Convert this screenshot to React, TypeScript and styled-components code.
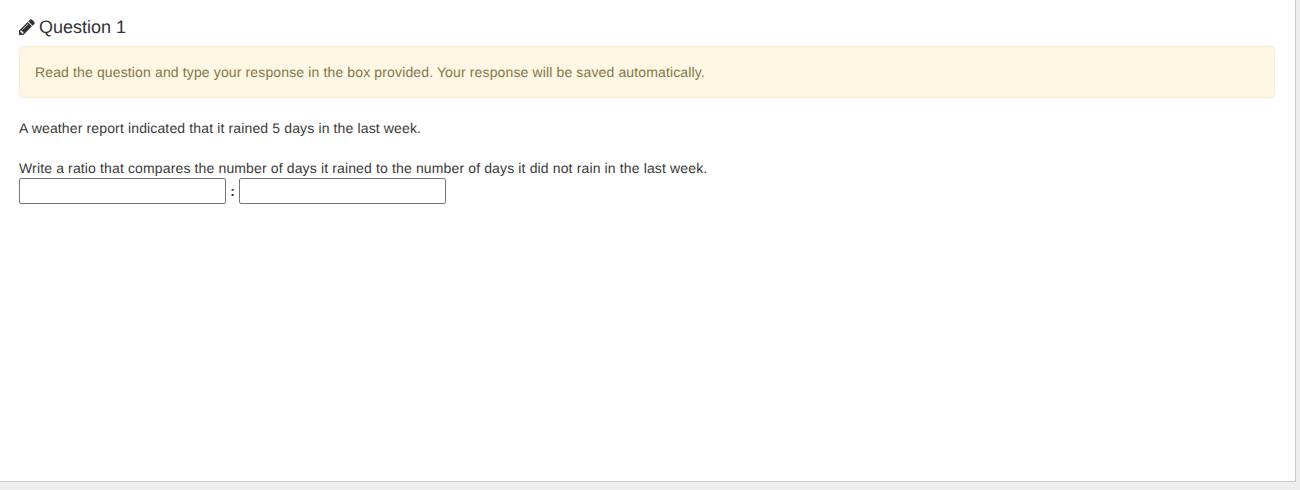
import React from "react";
import styled, { createGlobalStyle } from "styled-components";

const GlobalStyle = createGlobalStyle`
  html, body {
    margin: 0;
    padding: 0;
    height: 490px;
    overflow: hidden;
    background: #eeeeee;
    font-family: "Liberation Sans", Arial, sans-serif;
    font-size: 14px;
    line-height: 20px;
    color: #333333;
    text-rendering: geometricPrecision;
  }
`;

const Panel = styled.main`
  box-sizing: border-box;
  width: 1296px;
  height: 482px;
  padding: 17px 20px 0 19px;
  background: #ffffff;
  border-right: 1px solid #cccccc;
  border-bottom: 1px solid #cccccc;
`;

const Heading = styled.h3`
  display: flex;
  align-items: center;
  gap: 4px;
  margin: 0 0 9px;
  font-size: 18px;
  font-weight: 500;
  line-height: 20px;
  color: #333333;
`;

const PencilIcon = styled.svg`
  width: 16px;
  height: 16px;
  fill: #333333;
`;

const Alert = styled.div`
  box-sizing: border-box;
  height: 52px;
  margin-bottom: 20px;
  padding: 15px;
  background: #fdf7e3;
  border: 1px solid #faebcc;
  border-radius: 4px;
  color: #85754a;
  letter-spacing: 0.135px;
`;

const Paragraph = styled.p`
  margin: 0;
  height: 20px;
  letter-spacing: 0.138px;
  color: #3a3a3a;
`;

const Gap = styled.div`
  height: 20px;
`;

const RatioRow = styled.div`
  display: flex;
  align-items: center;
  height: 26px;
`;

const RatioInput = styled.input`
  box-sizing: border-box;
  width: 207px;
  height: 26px;
  padding: 1px 2px;
  background: #ffffff;
  border: 1px solid #767676;
  border-radius: 2px;
  font: inherit;
`;

const Colon = styled.span`
  width: 13px;
  text-align: center;
  font-weight: 700;
`;

export default function App() {
  return (
    <>
      <GlobalStyle />
      <Panel>
        <Heading>
          <PencilIcon viewBox="128 128 1540 1540" aria-hidden="true">
            <path d="M491 1536l91-91-235-235-91 91v107h128v128h107zm523-928q0-22-22-22-10 0-17 7l-542 542q-7 7-7 17 0 22 22 22 10 0 17-7l542-542q7-7 7-17zm-54-192l416 416-832 832h-416v-416zm683 96q0 53-37 90l-166 166-416-416 166-165q36-38 90-38 53 0 91 38l235 234q37 39 37 91z" />
          </PencilIcon>
          Question 1
        </Heading>
        <Alert>Read the question and type your response in the box provided. Your response will be saved automatically.</Alert>
        <Paragraph>A weather report indicated that it rained 5 days in the last week.</Paragraph>
        <Gap />
        <Paragraph>Write a ratio that compares the number of days it rained to the number of days it did not rain in the last week.</Paragraph>
        <RatioRow>
          <RatioInput type="text" aria-label="Days it rained" />
          <Colon>:</Colon>
          <RatioInput type="text" aria-label="Days it did not rain" />
        </RatioRow>
      </Panel>
    </>
  );
}
